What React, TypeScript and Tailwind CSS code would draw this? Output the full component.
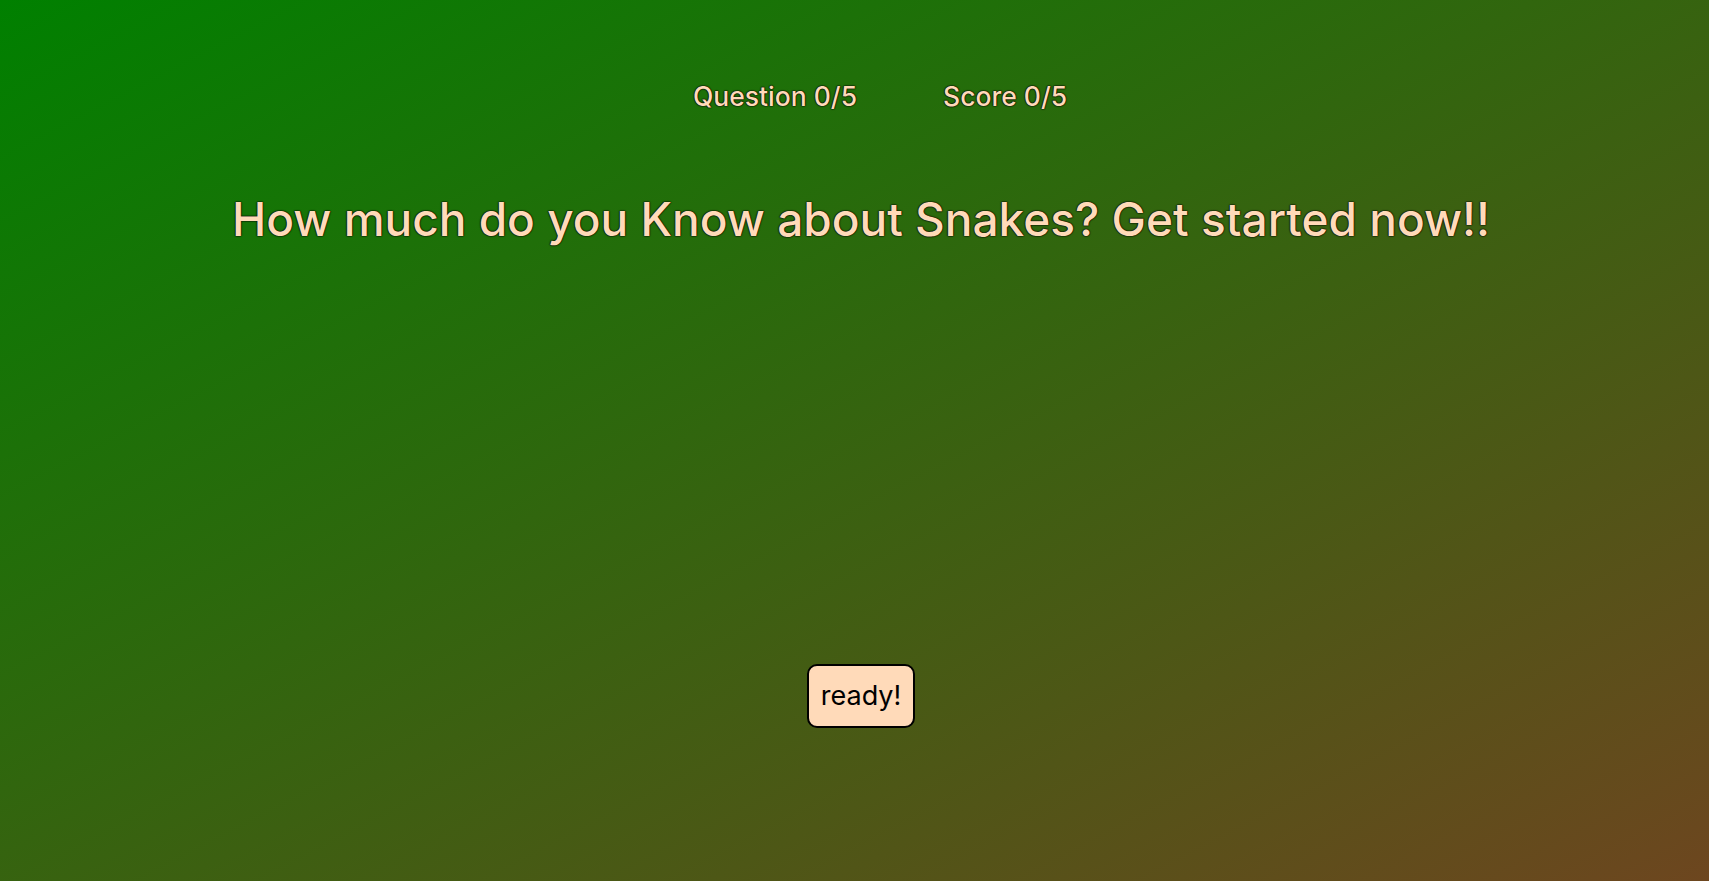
export default function App() {
  return (
    <div
      className="min-h-screen w-full flex flex-col items-center pl-[13px] bg-[linear-gradient(to_bottom_right,#008000,#6d461f)] text-[#ffdab9] [font-family:Inter,sans-serif] font-medium"
    >
      <div className="flex justify-center gap-[86px] pt-[79px] ml-[38px] text-[26.5px] leading-[34px] [text-shadow:0_0_2px_#000,0_0_1px_#000,0_0_1px_#000]">
        <span>Question 0/5</span>
        <span>Score 0/5</span>
      </div>
      <h1 className="mt-[78px] text-[46px] leading-[56px] font-medium [text-shadow:0_0_2px_#000,0_0_1px_#000,0_0_1px_#000]">
        How much do you Know about Snakes? Get started now!!
      </h1>
      <button className="mt-[417px] h-[64px] px-[12px] rounded-[10px] border-2 border-black bg-[#ffdab9] text-black text-[27px] font-normal">
        ready!
      </button>
    </div>
  );
}
